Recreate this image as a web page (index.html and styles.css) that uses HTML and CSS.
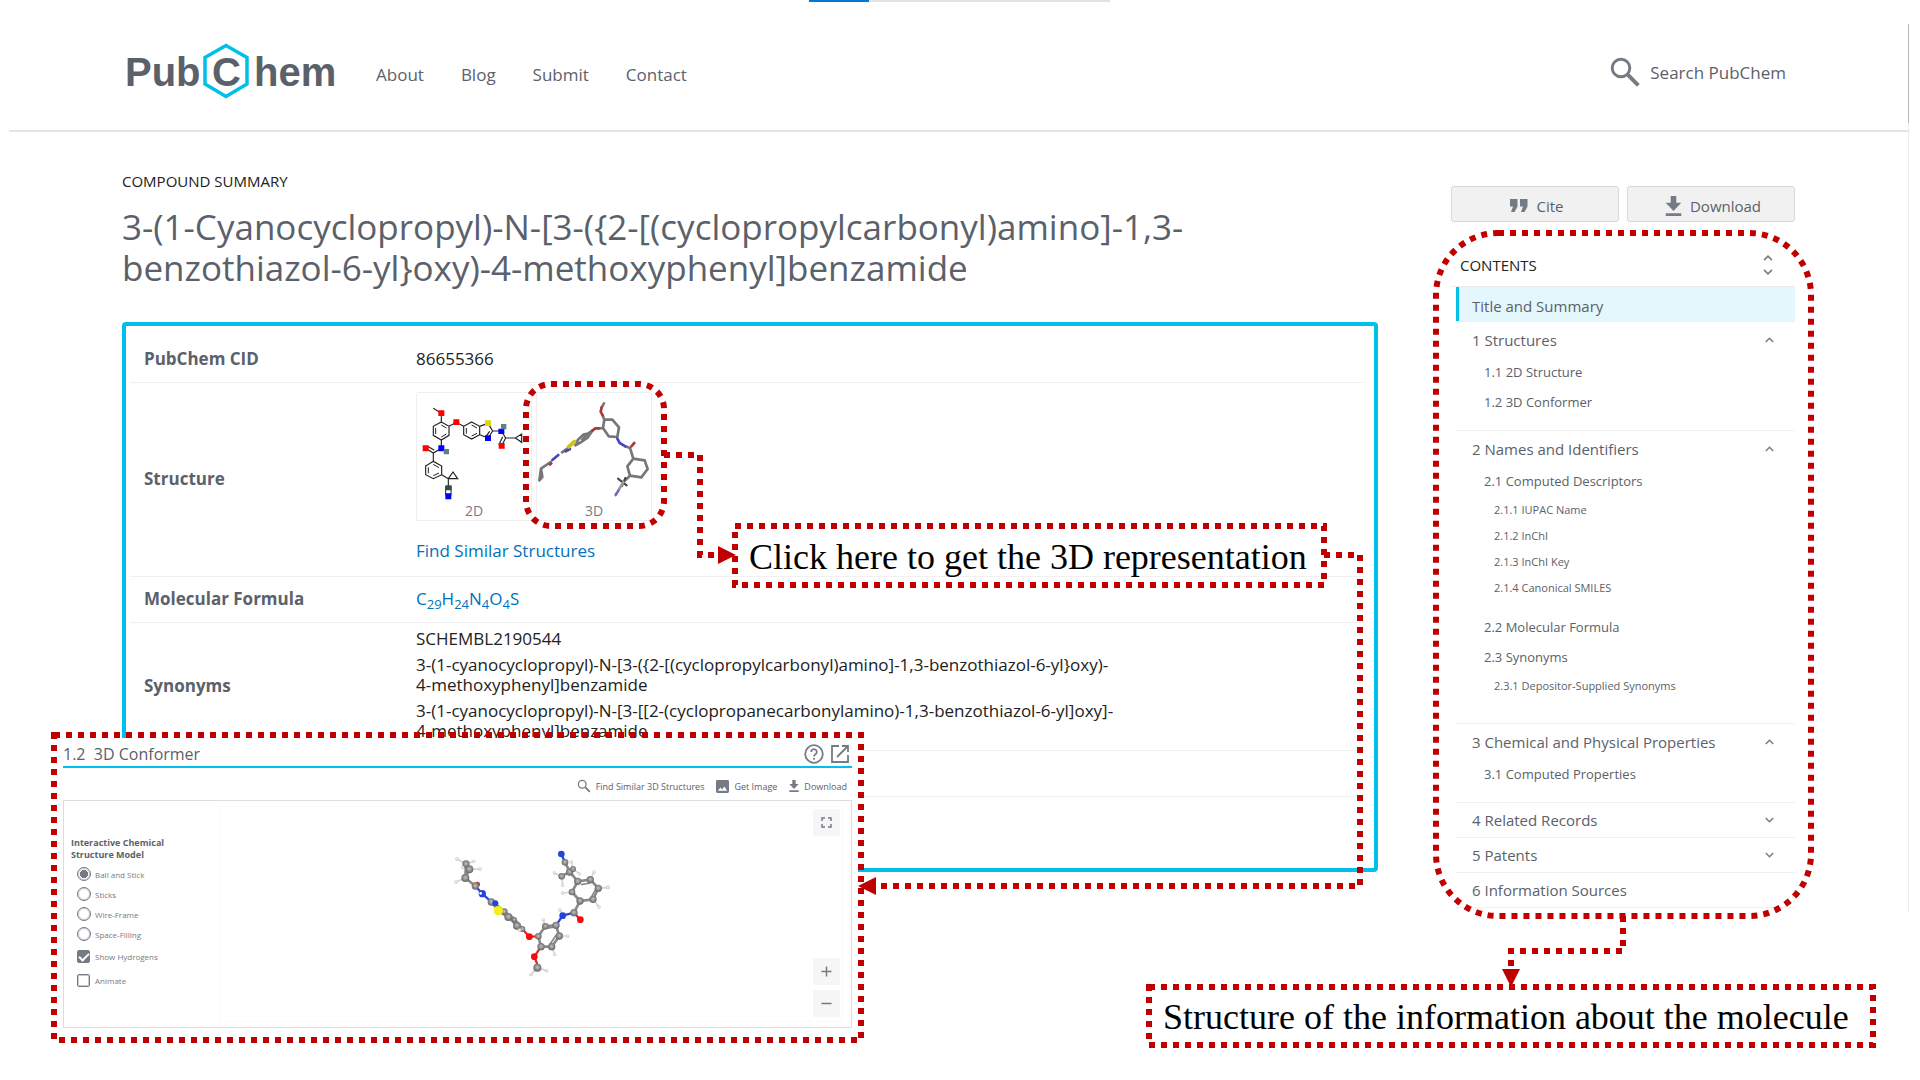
FILE: index.html
```html
<!DOCTYPE html>
<html lang="en">
<head>
<meta charset="utf-8">
<title>PubChem Compound Summary</title>
<link rel="stylesheet" href="styles.css">
</head>
<body>
<svg class="defs" width="0" height="0" aria-hidden="true">
  <symbol id="i-search" viewBox="0 0 24 24"><circle cx="9" cy="9" r="6.6" fill="none" stroke="currentColor" stroke-width="2.2"/><path d="M14 14l8 8" stroke="currentColor" stroke-width="3"/></symbol>
  <symbol id="i-download" viewBox="0 0 14 18"><path d="M4.500 0h5v6H14l-7 7.500L0 6h4.500zM0 15.500h14V18H0z" fill="currentColor"/></symbol>
  <symbol id="i-quote" viewBox="0 0 18 13"><path d="M0 0h7.500v7.500L4.500 13H1l2-5.500H0zM10 0h7.500v7.500l-3 5.500H11l2-5.500h-3z" fill="currentColor"/></symbol>
  <symbol id="i-up" viewBox="0 0 8 5"><path d="M.7 4.300L4 1l3.300 3.300" fill="none" stroke="currentColor" stroke-width="1.300"/></symbol>
  <symbol id="i-down" viewBox="0 0 8 5"><path d="M.7.700L4 4 7.300.700" fill="none" stroke="currentColor" stroke-width="1.300"/></symbol>
  <symbol id="i-image" viewBox="0 0 14 14"><path fill="currentColor" fill-rule="evenodd" d="M1.500 0h11A1.500 1.500 0 0 1 14 1.500v11a1.500 1.500 0 0 1-1.500 1.500h-11A1.500 1.500 0 0 1 0 12.500v-11A1.500 1.500 0 0 1 1.500 0zM2 11.500h10L9 7l-2.400 3.200L4.800 8z"/></symbol>
</svg>

<div class="page">
  <div class="progress"><span></span></div>
  <div class="scroll-edge"></div>

  <header class="site-header">
    <a class="logo" href="#" aria-label="PubChem">
      <svg width="216" height="56" viewBox="0 0 216 56">
        <path d="M104 2.500L125 14.500V41L104 53.500 83 41V14.500z" fill="none" stroke="#00bfe9" stroke-width="3.500"/>
        <g class="logo-text"><text x="3" y="43">Pub</text><text x="90" y="43">C</text><text x="132" y="43">hem</text></g>
      </svg>
    </a>
    <nav class="main-nav">
      <a href="#">About</a><a href="#">Blog</a><a href="#">Submit</a><a href="#">Contact</a>
    </nav>
    <a class="search" href="#"><svg width="32" height="32"><use href="#i-search"/></svg>Search PubChem</a>
  </header>

  <main class="layout">
    <article>
      <p class="eyebrow">COMPOUND SUMMARY</p>
      <h1>3-(1-Cyanocyclopropyl)-N-[3-({2-[(cyclopropylcarbonyl)amino]-1,3-<br>benzothiazol-6-yl}oxy)-4-methoxyphenyl]benzamide</h1>
      <div class="card">
        <table class="summary">
          <tbody>
            <tr><th scope="row">PubChem CID</th><td>86655366</td></tr>
            <tr class="row-structure"><th scope="row">Structure</th><td>
              <div class="thumbs">
                <a class="thumb" href="#">
                  <svg width="114" height="110" viewBox="50 65 342 330">
                    <g fill="none" stroke="#222" stroke-width="3.500">
                      <path d="M123 152L146 165V192L123 206 99 192V165zM123 152V126L99 111M146 165L168 153 190 165"/>
                      <path d="M214 152L238 165V190L214 203 190 190V165zM238 165L263 156 277 179 263 200 238 190M255 198L268 180M277 179H303L316 200H345L364 188V213L345 200M316 200L304 223M307 196L296 220"/>
                      <path d="M123 206V231L99 245 76 231M102 237L82 225M99 245V270L124 284V310L99 322 76 310V284L99 270M124 310L144 322 158 302 172 322H144V350"/>
                      <path d="M106 170V188M123 161L138 170M138 188L123 197M198 170V187M214 161L230 170M230 186L214 194M84 288V306M99 279L116 289M116 305L99 313M136 346V372M152 346V372" stroke-width="3"/>
                    </g>
                    <g fill="#f00"><path d="M114 117h18v17h-18zM159 144h18v17h-18zM67 222h18v18H67zM295 215h18v17h-18z"/></g>
                    <g fill="#00f"><path d="M114 222h18v18h-18zM294 172h18v16h-18zM254 192h18v17h-18zM135 366h18v18h-18z"/></g>
                    <path d="M254 147h18v17h-18z" fill="#dada00"/>
                    <path d="M302 158h16v16h-16zM130 233h16v16h-16z" fill="#5b8585"/>
                    <path d="M135 342h19v15h-19z" fill="#2d4f4f"/>
                  </svg>
                  <span>2D</span>
                </a>
                <a class="thumb" href="#">
                  <svg width="114" height="110" viewBox="409 65 342 330">
                    <g fill="none" stroke="#777" stroke-width="8" stroke-linecap="round" stroke-linejoin="round">
                      <path d="M610 96L603 108M606 132L611 145 635 145 655 168 650 197 624 195 607 170 611 145M607 170L594 171M575 178L562 187 548 190 532 205 524 222 542 212 560 200z"/>
                      <path d="M545 205L558 190M505 228L484 243M450 272L421 292 416 327 425 317 421 292M674 225L688 230 698 262 732 267 741 293 722 318 688 313 680 285 698 262M688 313L668 332"/>
                      <path d="M652 322L678 342M674 320L664 344" stroke="#444" stroke-width="6"/>
                      <path d="M668 332L654 356" stroke="#999"/>
                    </g>
                    <g fill="none" stroke-width="8" stroke-linecap="round">
                      <path d="M603 108L600 121 606 132M594 171L584 171 575 178M692 225L701 215M448 280L452 276" stroke="#a73b3b"/>
                      <path d="M650 202L657 215 674 225M473 251L455 266M508 233L495 240" stroke="#4646c2"/>
                      <path d="M653 358L645 371" stroke="#6b70b8"/>
                      <path d="M521 211L504 226" stroke="#cfc512" stroke-width="12"/>
                    </g>
                  </svg>
                  <span>3D</span>
                </a>
              </div>
              <a class="link similar" href="#">Find Similar Structures</a>
            </td></tr>
            <tr><th scope="row">Molecular Formula</th><td><a class="link" href="#">C<sub>29</sub>H<sub>24</sub>N<sub>4</sub>O<sub>4</sub>S</a></td></tr>
            <tr class="row-synonyms"><th scope="row">Synonyms</th><td>
              <ul class="synonyms">
                <li>SCHEMBL2190544</li>
                <li>3-(1-cyanocyclopropyl)-N-[3-({2-[(cyclopropylcarbonyl)amino]-1,3-benzothiazol-6-yl}oxy)-<br>4-methoxyphenyl]benzamide</li>
                <li>3-(1-cyanocyclopropyl)-N-[3-[[2-(cyclopropanecarbonylamino)-1,3-benzothiazol-6-yl]oxy]-<br>4-methoxyphenyl]benzamide</li>
              </ul>
            </td></tr>
            <tr><th></th><td></td></tr>
            <tr class="row-last"><th></th><td></td></tr>
          </tbody>
        </table>
      </div>
    </article>

    <aside>
      <div class="actions">
        <button type="button"><svg width="18" height="13"><use href="#i-quote"/></svg>Cite</button>
        <button type="button"><svg width="17" height="20"><use href="#i-download"/></svg>Download</button>
      </div>
      <nav class="contents">
        <h2>CONTENTS <span class="expand"><svg width="10" height="6"><use href="#i-up"/></svg><svg width="10" height="6"><use href="#i-down"/></svg></span></h2>
        <ul class="toc">
          <li class="active"><a href="#">Title and Summary</a></li>
          <li class="open"><a href="#">1 Structures<svg width="9" height="6"><use href="#i-up"/></svg></a>
            <ul class="l2"><li><a href="#">1.1 2D Structure</a></li><li><a href="#">1.2 3D Conformer</a></li></ul></li>
          <li class="open"><a href="#">2 Names and Identifiers<svg width="9" height="6"><use href="#i-up"/></svg></a>
            <ul class="l2">
              <li><a href="#">2.1 Computed Descriptors</a>
                <ul class="l3"><li><a href="#">2.1.1 IUPAC Name</a></li><li><a href="#">2.1.2 InChI</a></li><li><a href="#">2.1.3 InChI Key</a></li><li><a href="#">2.1.4 Canonical SMILES</a></li></ul></li>
              <li><a href="#">2.2 Molecular Formula</a></li>
              <li><a href="#">2.3 Synonyms</a>
                <ul class="l3"><li><a href="#">2.3.1 Depositor-Supplied Synonyms</a></li></ul></li>
            </ul></li>
          <li class="open"><a href="#">3 Chemical and Physical Properties<svg width="9" height="6"><use href="#i-up"/></svg></a>
            <ul class="l2"><li><a href="#">3.1 Computed Properties</a></li></ul></li>
          <li><a href="#">4 Related Records<svg width="9" height="6"><use href="#i-down"/></svg></a></li>
          <li><a href="#">5 Patents<svg width="9" height="6"><use href="#i-down"/></svg></a></li>
          <li><a href="#">6 Information Sources</a></li>
        </ul>
      </nav>
    </aside>
  </main>

  <section class="conformer">
    <header>
      <h3>1.2&nbsp; 3D Conformer</h3>
      <svg width="20" height="20" viewBox="0 0 20 20" fill="none" stroke="currentColor" stroke-width="1.800"><circle cx="10" cy="10" r="8.800"/><path d="M7.200 8a2.800 2.800 0 1 1 4.300 2.300c-1 .7-1.500 1-1.500 2.200M10 14v1.800"/></svg>
      <svg width="20" height="20" viewBox="0 0 20 20" fill="none" stroke="currentColor" stroke-width="1.800"><path d="M9 2H2v16h16v-7M12 2h6v6M18 2L7 13"/></svg>
    </header>
    <div class="tools">
      <a href="#"><svg width="14" height="14"><use href="#i-search"/></svg>Find Similar 3D Structures</a>
      <a href="#"><svg width="13" height="13"><use href="#i-image"/></svg>Get Image</a>
      <a href="#"><svg width="10" height="12"><use href="#i-download"/></svg>Download</a>
    </div>
    <div class="viewer">
      <form class="options">
        <fieldset>
          <legend>Interactive Chemical<br>Structure Model</legend>
          <label><input type="radio" name="model" checked>Ball and Stick</label>
          <label><input type="radio" name="model">Sticks</label>
          <label><input type="radio" name="model">Wire-Frame</label>
          <label><input type="radio" name="model">Space-Filling</label>
          <label class="tick"><input type="checkbox" checked>Show Hydrogens</label>
          <label class="tick"><input type="checkbox">Animate</label>
        </fieldset>
      </form>
      <div class="stage">
        <svg class="molecule" width="220" height="180" viewBox="0 0 660 540">
          <defs>
            <radialGradient id="gc" cx=".5" cy=".45" r=".6"><stop offset="0" stop-color="#c4c4c4"/><stop offset=".5" stop-color="#8c8c8c"/><stop offset="1" stop-color="#5c5c5c"/></radialGradient>
            <radialGradient id="gh" cx=".5" cy=".45" r=".6"><stop offset="0" stop-color="#fff"/><stop offset="1" stop-color="#b5b5b5"/></radialGradient>
          </defs>
          <g fill="none" stroke="#d5d5d5" stroke-width="5">
            <path d="M135 129L108 114M135 129L158 121M145 145L177 144M145 145L125 139M133 171L105 183M422 166L400 156M422 166L425 192M456 145L451 122M456 145L475 158M508 176L519 153M532 202L561 199M516 235L534 258M453 213L425 216M425 284L417 267M373 316L367 296M415 345L440 345M392 377L401 400M349 440L330 461M349 440L377 449"/>
          </g>
          <g fill="none" stroke="#8a8a8a" stroke-width="8">
            <path d="M135 129L145 145 133 171 135 129M133 171L163 195M211 243L232 269 262 288 288 314 304 324 280 293 250 272 223 248zM432 124L446 152M446 152L422 166M446 152L456 145M446 152L470 181 508 176 532 202 516 235 477 240 453 213 470 181M477 240L459 275M405 313L415 345 392 377 360 377 352 346 373 316z"/>
            <path d="M480 191L508 186M510 230L524 205M375 322L403 318M386 371L405 343" stroke-width="5"/>
          </g>
          <path d="M163 195L184 218 211 243M425 284L459 275M425 284L405 313M432 124L421 99" stroke="#2b45dd" stroke-width="7" fill="none"/>
          <path d="M304 324L325 347 352 346M360 377L340 407 349 430M459 275L478 296M163 195L170 188" stroke="#e22" stroke-width="7" fill="none"/>
          <circle cx="169" cy="190" r="8" fill="#b33"/>
          <g fill="url(#gc)">
            <circle cx="135" cy="129" r="11"/><circle cx="145" cy="145" r="12"/><circle cx="133" cy="171" r="12"/><circle cx="163" cy="195" r="11"/><circle cx="211" cy="243" r="11"/><circle cx="250" cy="272" r="10"/><circle cx="262" cy="288" r="12"/><circle cx="288" cy="314" r="12"/><circle cx="304" cy="324" r="9"/><circle cx="280" cy="296" r="8"/>
            <circle cx="432" cy="124" r="10"/><circle cx="446" cy="153" r="11"/><circle cx="422" cy="166" r="10"/><circle cx="456" cy="144" r="9"/><circle cx="470" cy="181" r="11"/><circle cx="508" cy="176" r="11"/><circle cx="532" cy="202" r="11"/><circle cx="516" cy="235" r="11"/><circle cx="477" cy="240" r="11"/><circle cx="453" cy="213" r="10"/><circle cx="459" cy="275" r="11"/>
            <circle cx="405" cy="313" r="11"/><circle cx="415" cy="345" r="11"/><circle cx="392" cy="377" r="11"/><circle cx="360" cy="377" r="11"/><circle cx="352" cy="346" r="10"/><circle cx="373" cy="316" r="10"/><circle cx="349" cy="440" r="12"/>
          </g>
          <g fill="url(#gh)">
            <circle cx="108" cy="114" r="5"/><circle cx="158" cy="121" r="5"/><circle cx="177" cy="144" r="5"/><circle cx="125" cy="139" r="5"/><circle cx="105" cy="183" r="5"/><circle cx="400" cy="156" r="5"/><circle cx="425" cy="192" r="5"/><circle cx="451" cy="122" r="5"/><circle cx="475" cy="158" r="5"/><circle cx="519" cy="153" r="5"/><circle cx="561" cy="199" r="6"/><circle cx="534" cy="258" r="5"/><circle cx="425" cy="216" r="5"/><circle cx="417" cy="267" r="5"/><circle cx="367" cy="296" r="5"/><circle cx="440" cy="345" r="5"/><circle cx="401" cy="400" r="5"/><circle cx="330" cy="461" r="5"/><circle cx="377" cy="449" r="5"/><circle cx="296" cy="327" r="5"/>
          </g>
          <g fill="#2344dd"><circle cx="421" cy="99" r="10"/><circle cx="184" cy="218" r="11"/><circle cx="223" cy="247" r="9"/><circle cx="425" cy="284" r="10"/></g>
          <circle cx="179" cy="217" r="4" fill="#fff"/>
          <g fill="#f00e0e"><circle cx="325" cy="347" r="10"/><circle cx="340" cy="407" r="10"/><circle cx="478" cy="296" r="10"/></g>
          <circle cx="232" cy="269" r="14" fill="#f3ee1c"/>
        </svg>
        <div class="controls">
          <button type="button" aria-label="Full screen"><svg width="11" height="11" viewBox="0 0 11 11"><path d="M1 4V1h3M7 1h3v3M10 7v3H7M4 10H1V7"/></svg></button>
          <button type="button" class="zoom-in" aria-label="Zoom in"><svg width="11" height="11" viewBox="0 0 11 11"><path d="M.5 5.500h10M5.500.500v10"/></svg></button>
          <button type="button" aria-label="Zoom out"><svg width="11" height="11" viewBox="0 0 11 11"><path d="M.5 5.500h10"/></svg></button>
        </div>
      </div>
    </div>
  </section>

  <svg class="marks" width="1920" height="1080" viewBox="0 0 1920 1080" aria-hidden="true">
    <g class="dots">
      <rect x="526" y="384" width="138" height="142" rx="25"/>
      <rect x="1436" y="233" width="375" height="683" rx="62"/>
      <rect x="735" y="526" width="589" height="59"/>
      <rect x="1149" y="987" width="724" height="58"/>
      <rect x="54" y="735" width="807" height="305"/>
      <path d="M664 455H700V555H721"/>
      <path d="M1324 555H1360V886H876"/>
      <path d="M1623 916V951H1511V970"/>
    </g>
    <path class="tips" d="M718 546l18 9-18 9zM876 877l-18 9 18 9zM1502 969l9 18 9-18z"/>
  </svg>
  <p class="callout callout-3d">Click here to get the 3D representation</p>
  <p class="callout callout-contents">Structure of the information about the molecule</p>
</div>
</body>
</html>
```
FILE: styles.css
```css
* { box-sizing: border-box; }
body {
  margin: 0;
  background: #fff;
  color: #212121;
  font-family: "Open Sans", "Noto Sans", sans-serif;
  font-size: 17px;
}
h1, h2, h3, p, ul { margin: 0; padding: 0; font-weight: 400; }
ul { list-style: none; }
a { color: inherit; text-decoration: none; }
button { font: inherit; color: inherit; padding: 0; }
.defs { position: absolute; }
.page { position: relative; min-height: 100vh; color: #5b616b; }

.progress { position: absolute; top: 0; left: 809px; width: 301px; height: 2px; background: #e3e3e3; }
.progress span { display: block; width: 60px; height: 2px; background: #0078d7; }
.scroll-edge {
  position: absolute; top: 24px; right: 11px; width: 1px; height: 888px;
  background: linear-gradient(#b5b5b5 99px, #ececec 99px);
}

/* Header */
.site-header {
  display: flex; align-items: center;
  height: 132px; margin: 0 12px 0 9px; padding: 14px 122px 0 113px;
  border-bottom: 2px solid #e4e4e4;
}
.logo { display: block; height: 58px; }
.logo-text { font: 700 40px "Liberation Sans", Arial, sans-serif; fill: #5b616b; }
.main-nav { display: flex; gap: 37px; margin-left: 38px; padding-top: 4px; }
.search { display: flex; align-items: center; gap: 9px; margin-left: auto; }
.search svg { color: #757b84; }

/* Page columns */
.layout { display: grid; grid-template-columns: minmax(0, 1fr) 344px; column-gap: 73px; padding: 0 125px 0 122px; }
article { padding-top: 37px; }
.eyebrow { line-height: 24px; font-size: 15px; color: #212121; margin-bottom: 13px; }
h1 { font-size: 35px; line-height: 41px; margin-bottom: 34px; }

.card { border: 4px solid #00bfe9; border-radius: 4px; padding: 10px 10px 0 4px; }
.summary { width: 100%; border-collapse: collapse; color: #212121; }
.summary th, .summary td { height: 46px; padding: 0; border-bottom: 1px solid #f0f0f0; text-align: left; vertical-align: middle; line-height: 20px; }
.summary th { width: 286px; padding-left: 14px; color: #5b616b; font-weight: 700; }
.summary .row-structure > * { height: 194px; }
.summary .row-structure td { padding-top: 9px; vertical-align: top; }
.summary .row-synonyms > * { height: 128px; }
.summary .row-synonyms td { padding-bottom: 2px; }
.summary .row-last > * { height: 72px; border-bottom: 0; }
.thumbs { display: flex; gap: 4px; margin-bottom: 20px; }
.thumb { width: 116px; height: 129px; border: 1px solid #eee; border-radius: 2px; overflow: hidden; color: #757b84; font-size: 14px; text-align: center; }
.thumb svg, .thumb span { display: block; }
.thumb span { line-height: 16px; }
.link { color: #0071bc; }
.similar { display: block; }
sub { font-size: 13px; line-height: 0; }
.synonyms { display: grid; gap: 6px; }

/* Sidebar */
aside { padding-top: 54px; }
.actions { display: grid; grid-template-columns: 1fr 1fr; gap: 8px; }
.actions button {
  display: flex; align-items: center; justify-content: center; gap: 8px;
  height: 36px; padding: 3px 0 0 4px; background: #f1f1f1; border: 1px solid #d8d8d8; border-radius: 3px; font-size: 15px;
}
.actions svg { color: #757b84; }
.contents h2 {
  display: flex; align-items: center; justify-content: space-between;
  height: 43px; margin-top: 22px; padding: 0 22px 0 9px;
  border-bottom: 1px solid #ececec; color: #212121; font-size: 15px;
}
.expand { display: grid; gap: 8px; color: #757b84; }
.toc { margin-left: 5px; font-size: 15px; }
.toc > li { border-bottom: 1px solid #f0f0f0; }
.toc a { display: flex; align-items: center; height: 34px; padding-left: 16px; }
.toc svg { margin-left: auto; margin-right: 21px; color: #757b84; }
.toc .active a { padding: 3px 0 0 13px; border-left: 3px solid #00bfe9; background: #e3f7fd; }
.toc .open > a { height: 35px; }
.toc .l2 { padding-bottom: 13px; font-size: 13px; }
.toc .l2 a { height: 30px; padding-left: 28px; }
.toc .l3 { padding-bottom: 12px; font-size: 11px; }
.toc .l3 a { height: 26px; padding-left: 38px; }

/* 3D conformer window, laid over the summary card */
.conformer { position: absolute; top: 738px; left: 57px; width: 801px; height: 299px; padding: 4px 6px 0; background: #fff; color: #5b616b; }
.conformer header { display: flex; align-items: center; gap: 6px; height: 26px; padding-right: 2px; border-bottom: 2px solid #00bfe9; }
.conformer h3 { flex: 1; font-size: 16px; line-height: 24px; }
.conformer header svg, .tools svg { color: #757b84; }
.tools { display: flex; justify-content: flex-end; align-items: center; gap: 12px; height: 32px; padding: 4px 5px 0 0; font-size: 9px; }
.tools a { display: flex; align-items: center; gap: 5px; }
.viewer { display: grid; grid-template-columns: 151px 1fr; height: 228px; padding: 5px 8px 5px 5px; border: 1px solid #ddd; }
.options fieldset { margin: 0; padding: 31px 0 0 2px; border: 0; }
.options legend { float: left; width: 100%; padding: 0 0 3px; font-size: 9px; font-weight: 700; line-height: 12px; }
.options label { display: flex; align-items: center; gap: 4px; clear: both; height: 20px; padding-left: 6px; font-size: 8px; color: #757b84; }
.options .tick { height: 24px; }
.options input { appearance: none; width: 14px; height: 14px; margin: 0; border: 1px solid #757b84; outline: 1px solid #757b8466; outline-offset: -2px; border-radius: 50%; background: #fff; }
.options input:checked { background: radial-gradient(circle, #757b84 4px, #fff 4px); }
.options .tick input { width: 13px; height: 13px; margin-right: 1px; border-radius: 2px; }
.options .tick input:checked { display: grid; place-items: center; background: #757b84; }
.options .tick input:checked::before { content: ""; width: 4px; height: 8px; margin-bottom: 2px; border: solid #fff; border-width: 0 2px 2px 0; transform: rotate(45deg); }
.stage { display: flex; padding-right: 2px; border: 1px solid #fafafa; }
.molecule { flex: none; margin: 14px auto 0; }
.controls { display: flex; flex-direction: column; gap: 5px; padding: 2px 0 4px; margin-left: -27px; }
.controls button { display: grid; place-items: center; width: 27px; height: 27px; border: 0; background: #f6f6f6; }
.controls path { fill: none; stroke: #757b84; stroke-width: 1.5px; }
.controls .zoom-in { margin-top: auto; }

/* Annotations */
.marks { position: absolute; top: 0; left: 0; pointer-events: none; }
.dots { fill: none; stroke: #c00000; stroke-width: 6px; stroke-dasharray: 6 6; }
.tips { fill: #c00000; }
.callout { position: absolute; color: #000; font: 36px/40px "Liberation Serif", "Times New Roman", serif; white-space: nowrap; }
.callout-3d { top: 537px; left: 749px; }
.callout-contents { top: 997px; left: 1163px; }
```
